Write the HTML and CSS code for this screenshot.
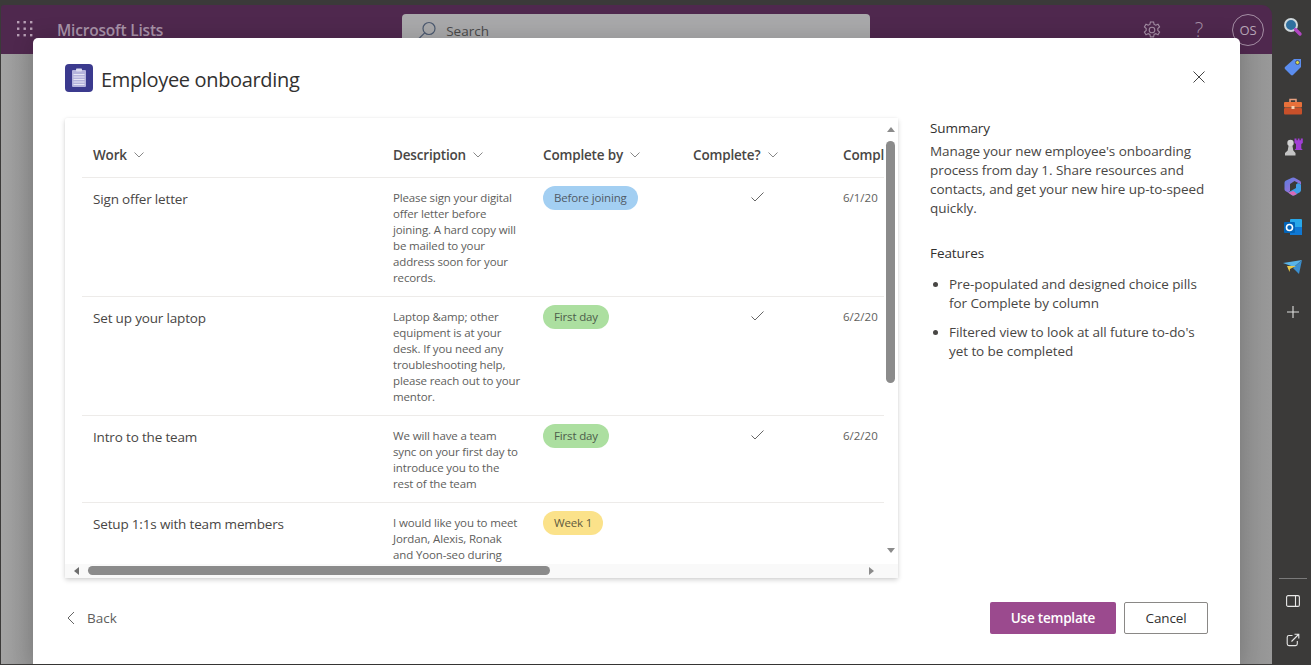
FILE: index.html
```html
<!DOCTYPE html>
<html lang="en">
<head>
<meta charset="utf-8">
<title>Employee onboarding</title>
<link rel="stylesheet" href="styles.css">
</head>
<body>
<div class="desktop">
  <div class="app">
    <header class="appbar">
      <svg class="waffle" width="16" height="16" viewBox="0 0 16 16"><g fill="#b79fb5"><rect x="0" y="0" width="2.4" height="2.4"/><rect x="6.5" y="0" width="2.4" height="2.4"/><rect x="13" y="0" width="2.4" height="2.4"/><rect x="0" y="6.5" width="2.4" height="2.4"/><rect x="6.5" y="6.5" width="2.4" height="2.4"/><rect x="13" y="6.5" width="2.4" height="2.4"/><rect x="0" y="13" width="2.4" height="2.4"/><rect x="6.5" y="13" width="2.4" height="2.4"/><rect x="13" y="13" width="2.4" height="2.4"/></g></svg>
      <span class="appname">Microsoft Lists</span>
      <div class="searchbox">
        <svg width="20" height="20" viewBox="0 0 20 20" fill="none" stroke="#4c5a70" stroke-width="1.2"><circle cx="12" cy="7.5" r="6"/><path d="M7.7 11.8 1.5 18"/></svg>
        <span>Search</span>
      </div>
      <div class="appbar-actions">
        <svg width="20" height="20" viewBox="0 0 20 20" fill="none" stroke="#a58fa5" stroke-width="1.1"><circle cx="10" cy="10" r="2.8"/><path d="M8.4 2h3.2l.5 2.4 1.7.8 2.2-1 1.6 2.7-1.8 1.6v1.9l1.8 1.6-1.6 2.7-2.2-1-1.7.8-.5 2.4H8.4l-.5-2.4-1.7-.8-2.2 1-1.6-2.7 1.8-1.6V8.5L2.4 6.9 4 4.2l2.2 1 1.7-.8z"/></svg>
        <span class="help">?</span>
        <span class="avatar">OS</span>
      </div>
    </header>
    <div class="backdrop"></div>
  </div>

  <aside class="rail">
    <div class="rail-top">
      <svg width="20" height="20" viewBox="0 0 20 20"><circle cx="8" cy="8" r="6" fill="#2f6f9f" stroke="#cfd8dc" stroke-width="2"/><path d="M12.5 12.5 17 17" stroke="#b146c2" stroke-width="3.4" stroke-linecap="round"/></svg>
      <svg width="20" height="20" viewBox="0 0 20 20"><path d="M11 2h7v8l-8 8a1.500 1.500 0 0 1-2 0L2 12a1.500 1.500 0 0 1 0-2z" fill="#5b8def"/><circle cx="14.500" cy="5.500" r="2" fill="#d8d84a" stroke="#46507a"/></svg>
      <svg width="20" height="20" viewBox="0 0 20 20"><path d="M7 5V2.500h6V5" fill="none" stroke="#e8a080" stroke-width="1.500"/><rect x="1" y="5" width="18" height="5.500" rx="1" fill="#e8703a"/><rect x="1" y="11" width="18" height="6.500" rx="1" fill="#c8502a"/><rect x="8.500" y="9" width="3" height="3" fill="#f6d0b0"/></svg>
      <svg width="20" height="20" viewBox="0 0 20 20"><circle cx="7.500" cy="6" r="3.200" fill="#d2d2d2"/><path d="M5.500 9h4l.8 4.500 2.200 2.500v2.500H2V16l2.700-2.500z" fill="#c4c4c4"/><path d="M11.500 1.500h2v1.700h1.300V1.500h1.700v1.700h1.300V1.500h2v4.500l-1.500 1v4.500l1.500 1.500h-8.300l1.500-1.500V7l-1.500-1z" fill="#a23fd6"/></svg>
      <svg width="20" height="20" viewBox="0 0 20 20"><defs><linearGradient id="hexa" x1="0" y1="0" x2="1" y2="1"><stop offset="0" stop-color="#5a7fe0"/><stop offset="1" stop-color="#b06ad8"/></linearGradient></defs><path d="M9 .800a3 3 0 0 1 2.500 0l5 2.700c1 .6 1.500 1.400 1.500 2.500v1.500L11.500 4 7 7v7l-2 1.500-2.200-1.300C1.800 13.600 1.500 12.800 1.500 12V6c0-1.100.5-1.900 1.500-2.500z" fill="url(#hexa)"/><path d="M18 7.500V13c0 1-.5 1.800-1.500 2.400L11.500 18.300a3 3 0 0 1-2.500 0L5 15.500 13 11V7.500L15 6z" fill="#3f9fe8"/><path d="M5 15.500l4 2.800a3 3 0 0 0 2.500 0L14 17l-3.500-3z" fill="#d86ab8"/></svg>
      <svg width="20" height="20" viewBox="0 0 20 20"><rect x="7" y="2" width="12" height="16" rx="1" fill="#28a8ea"/><rect x="7" y="10" width="12" height="8" fill="#0f78d4"/><rect x="1" y="5" width="11" height="11" rx="1" fill="#0364b8"/><circle cx="6.500" cy="10.500" r="3" fill="none" stroke="#fff" stroke-width="1.600"/></svg>
      <svg width="20" height="20" viewBox="0 0 20 20"><path d="M0 6 19 3 11 10z" fill="#58b4e8"/><path d="M19 3 16 17 10 11z" fill="#3a8fd0"/><path d="M4 9 13 9 7 12 6.500 15z" fill="#e8c84a"/></svg>
      <svg class="plus" width="14" height="14" viewBox="0 0 14 14"><path d="M7 1v12M1 7h12" stroke="#dedede" stroke-width="1.100"/></svg>
    </div>
    <div class="rail-bottom">
      <svg width="14" height="12" viewBox="0 0 14 12" fill="none" stroke="#e8e8e8" stroke-width="1.100"><rect x=".6" y=".6" width="12.800" height="10.800" rx="1.500"/><path d="M9.500 .6v10.800"/></svg>
      <svg width="14" height="14" viewBox="0 0 14 14" fill="none" stroke="#e8e8e8" stroke-width="1.100"><path d="M6.500 2.500H3A1.800 1.800 0 0 0 1.200 4.300v6.500A1.800 1.800 0 0 0 3 12.600h6.500a1.800 1.800 0 0 0 1.800-1.800V8"/><path d="M5.500 8.500 12.500 1.500M8.500 1.200h4.300v4.300"/></svg>
    </div>
  </aside>

  <section class="modal">
    <div class="modal-head">
      <svg class="listicon" width="28" height="28" viewBox="0 0 28 28"><rect width="28" height="28" rx="4" fill="#3b3a8e"/><rect x="7" y="6" width="14" height="17" rx="1" fill="#b4b3dc"/><rect x="11" y="4.500" width="6" height="3" rx=".8" fill="#dcdcf0"/><g fill="#e6e6f4"><rect x="8.500" y="10" width="11" height="1"/><rect x="8.500" y="12.500" width="11" height="1"/><rect x="8.500" y="15" width="11" height="1"/><rect x="8.500" y="17.500" width="11" height="1"/><rect x="8.500" y="20" width="11" height="1"/></g></svg>
      <h1>Employee onboarding</h1>
      <svg class="close" width="12" height="12" viewBox="0 0 12 12"><path d="M.5.500l11 11M11.500.500l-11 11" stroke="#444" stroke-width="1"/></svg>
    </div>

    <div class="modal-body">
      <div class="preview">
        <div class="table-clip">
          <table>
            <colgroup><col class="c-work"><col class="c-std"><col class="c-std"><col class="c-std"><col class="c-last"></colgroup>
            <thead>
              <tr>
                <th>Work <svg class="chev" width="10" height="6" viewBox="0 0 10 6"><path d="M.5.500 5 5 9.500.500" fill="none" stroke="#888"/></svg></th>
                <th>Description <svg class="chev" width="10" height="6" viewBox="0 0 10 6"><path d="M.5.500 5 5 9.500.500" fill="none" stroke="#888"/></svg></th>
                <th>Complete by <svg class="chev" width="10" height="6" viewBox="0 0 10 6"><path d="M.5.500 5 5 9.500.500" fill="none" stroke="#888"/></svg></th>
                <th>Complete? <svg class="chev" width="10" height="6" viewBox="0 0 10 6"><path d="M.5.500 5 5 9.500.500" fill="none" stroke="#888"/></svg></th>
                <th class="clipcell"><span>Compl</span></th>
              </tr>
            </thead>
            <tbody>
              <tr>
                <td class="work">Sign offer letter</td>
                <td class="desc">Please sign your digital offer letter before joining. A hard copy will be mailed to your address soon for your records.</td>
                <td class="pillcell"><span class="pill blue">Before joining</span></td>
                <td class="tick"><svg width="13" height="10" viewBox="0 0 13 10"><path d="M.5 5.500 4 9l8.500-8.500" fill="none" stroke="#666"/></svg></td>
                <td class="date">6/1/20</td>
              </tr>
              <tr>
                <td class="work">Set up your laptop</td>
                <td class="desc">Laptop &amp;amp; other equipment is at your desk. If you need any troubleshooting help, please reach out to your mentor.</td>
                <td class="pillcell"><span class="pill green">First day</span></td>
                <td class="tick"><svg width="13" height="10" viewBox="0 0 13 10"><path d="M.5 5.500 4 9l8.500-8.500" fill="none" stroke="#666"/></svg></td>
                <td class="date">6/2/20</td>
              </tr>
              <tr>
                <td class="work">Intro to the team</td>
                <td class="desc">We will have a team sync on your first day to introduce you to the rest of the team</td>
                <td class="pillcell"><span class="pill green">First day</span></td>
                <td class="tick"><svg width="13" height="10" viewBox="0 0 13 10"><path d="M.5 5.500 4 9l8.500-8.500" fill="none" stroke="#666"/></svg></td>
                <td class="date">6/2/20</td>
              </tr>
              <tr>
                <td class="work">Setup 1:1s with team members</td>
                <td class="desc">I would like you to meet Jordan, Alexis, Ronak and Yoon-seo during</td>
                <td class="pillcell"><span class="pill yellow">Week 1</span></td>
                <td></td>
                <td></td>
              </tr>
            </tbody>
          </table>
        </div>
        <div class="vbar">
          <span class="arrow up"></span>
          <span class="thumb-v"></span>
          <span class="arrow down"></span>
        </div>
        <div class="hbar">
          <span class="arrow left"></span>
          <span class="thumb-h"></span>
          <span class="arrow right"></span>
        </div>
      </div>

      <div class="info">
        <h2>Summary</h2>
        <p>Manage your new employee's onboarding process from day 1. Share resources and contacts, and get your new hire up-to-speed quickly.</p>
        <h2 class="features">Features</h2>
        <ul>
          <li>Pre-populated and designed choice pills for Complete by column</li>
          <li>Filtered view to look at all future to-do's yet to be completed</li>
        </ul>
      </div>
    </div>

    <div class="modal-foot">
      <div class="back">
        <svg width="9" height="14" viewBox="0 0 9 14"><path d="M8 1 2 7l6 6" fill="none" stroke="#666"/></svg>
        <span>Back</span>
      </div>
      <div class="actions">
        <button class="primary">Use template</button>
        <button class="secondary">Cancel</button>
      </div>
    </div>
  </section>
</div>
</body>
</html>
```
FILE: styles.css
```css
* { box-sizing: border-box; }
html, body { margin: 0; height: 100%; overflow: hidden; }
body { font-family: "Open Sans", "Noto Sans", "Liberation Sans", sans-serif; color: #323130; background: #3b3a39; }

.desktop { position: relative; display: flex; width: 1311px; height: 665px; padding-top: 5px; padding-bottom: 1px; padding-left: 1px; background: #3b3a39; }
.app { flex: 1; display: flex; flex-direction: column; min-width: 0; }

.appbar { height: 49px; display: flex; align-items: center; background: #4f284e; border-radius: 3px 10px 0 0; padding-left: 16px; }
.waffle { flex: none; margin-top: -2px; }
.appname { margin-left: 24px; font-size: 15.5px; font-weight: 600; color: #a893a8; letter-spacing: -.2px; white-space: nowrap; }
.searchbox { width: 468px; height: 40px; margin-left: 239px; margin-top: 8px; padding: 0 0 6px 15px; display: flex; align-items: center; gap: 9px; background: #a9a9ab; border-radius: 4px 4px 0 0; font-size: 13.5px; color: #4a4a4a; }
.appbar-actions { margin-left: auto; margin-right: 8px; display: flex; align-items: center; gap: 0; color: #a58fa5; }
.help { width: 20px; margin-left: 27px; text-align: center; font-size: 20px; font-weight: 300; line-height: 20px; }
.avatar { width: 32px; height: 32px; margin-left: 23px; border: 1px solid #a58fa5; border-radius: 50%; display: flex; align-items: center; justify-content: center; font-size: 13px; color: #b8a6b8; }
.backdrop { flex: 1; background: linear-gradient(90deg, #a3a3a3 0, #929292 32px, #8f8f8f 1238px, #999 1271px); }

.rail { width: 39px; flex: none; display: flex; flex-direction: column; justify-content: space-between; align-items: center; background: #3b3a39; }
.rail-top { display: flex; flex-direction: column; align-items: center; gap: 20px; padding-top: 12px; padding-left: 3px; }
.plus { margin-top: 8px; }
.rail-bottom { width: 28px; margin-left: 3px; display: flex; flex-direction: column; align-items: center; gap: 26px; padding: 16px 0 17px; border-top: 1px solid #7a7a7a; }

.modal { position: absolute; left: 33px; top: 38px; width: 1207px; height: 626px; display: flex; flex-direction: column; background: #fff; border-radius: 5px 5px 0 0; box-shadow: 0 0 22px rgba(0,0,0,.16); }
.modal-head { height: 80px; flex: none; display: flex; align-items: flex-start; padding: 26px 35px 0 32px; }
.listicon { flex: none; }
h1 { margin: 0 0 0 8px; font-size: 20px; line-height: 32px; font-weight: 500; letter-spacing: -.34px; color: #323130; white-space: nowrap; }
.close { margin-left: auto; margin-top: 7px; }

.modal-body { flex: 1; min-height: 0; display: flex; padding-left: 32px; }
.preview { position: relative; width: 833px; height: 460px; flex: none; border-radius: 2px; box-shadow: 0 2px 5px rgba(0,0,0,.18), 0 0 2px rgba(0,0,0,.05); padding: 15px 0 0 17px; }
.table-clip { width: 802px; height: 431px; overflow: hidden; }
table { border-collapse: collapse; table-layout: fixed; width: 911px; }
.c-work { width: 300px; }
.c-std { width: 150px; }
.c-last { width: 161px; }
th { height: 44px; padding: 0 0 0 11px; text-align: left; font-size: 13.5px; font-weight: 600; letter-spacing: -.17px; color: #484644; white-space: nowrap; border-bottom: 1px solid #edebe9; overflow: hidden; }
.chev { margin-left: 4px; vertical-align: 2px; }
.clipcell { overflow: hidden; }
td { padding: 8px 20px 7px 11px; vertical-align: top; border-bottom: 1px solid #edebe9; }
.work { padding-top: 12px; font-size: 13.5px; line-height: 19px; letter-spacing: -.17px; color: #484644; }
.desc { padding: 12px 10px 10px 11px; font-size: 11.500px; line-height: 16px; letter-spacing: -.14px; color: #605e5c; }
.pillcell { padding-top: 7px; }
.pill { display: inline-block; height: 24px; padding: 0 11px; border-radius: 12px; font-size: 11.500px; line-height: 24px; letter-spacing: -.15px; white-space: nowrap; color: #505a66; }
.blue { background: #a3cff2; }
.green { background: #acdfa0; color: #4d5d4b; }
.yellow { background: #fbe28a; color: #5f5a3e; }
.tick { padding-top: 13px; padding-left: 69px; line-height: 10px; }
.date { padding-top: 12px; font-size: 11.500px; line-height: 16px; color: #605e5c; white-space: nowrap; }

.vbar { position: absolute; right: 0; top: 0; width: 14px; height: 446px; background: #fff; }
.thumb-v { position: absolute; left: 2px; top: 23px; width: 9px; height: 242px; border-radius: 5px; background: #8b8b8b; }
.hbar { position: absolute; left: 0; bottom: 0; width: 100%; height: 14px; background: #f9f9f9; }
.thumb-h { position: absolute; left: 23px; top: 2px; width: 462px; height: 9px; border-radius: 5px; background: #8b8b8b; }
.arrow { position: absolute; width: 0; height: 0; border: 4px solid transparent; }
.up { left: 3px; top: 9px; border-top: 0; border-bottom: 5px solid #8b8b8b; }
.down { left: 3px; top: 430px; border-bottom: 0; border-top: 5px solid #8b8b8b; }
.left { left: 9px; top: 3px; border-left: 0; border-right: 5px solid #6e6e6e; }
.right { left: 804px; top: 3px; border-right: 0; border-left: 5px solid #8b8b8b; }

.info { width: 280px; margin-left: 32px; padding-top: 1px; font-size: 13.5px; line-height: 19px; letter-spacing: -.07px; color: #484644; }
h2 { margin: 0; font-size: 13.5px; line-height: 19px; font-weight: 500; color: #323130; }
.info p { margin: 4px 0 0; }
.info h2.features { margin-top: 26px; }
ul { margin: 12px 0 0; padding: 0 0 0 19px; }
li { margin-bottom: 10px; }

.modal-foot { height: 88px; flex: none; display: flex; align-items: flex-start; justify-content: space-between; padding: 26px 32px 0 33px; }
.back { display: flex; align-items: center; height: 32px; font-size: 13.5px; color: #605e5c; }
.back span { margin-left: 12px; }
.actions { display: flex; gap: 8px; }
button { height: 32px; padding: 0; border-radius: 2px; font-family: inherit; font-size: 13.500px; letter-spacing: -.13px; cursor: pointer; }
.primary { width: 126px; font-weight: 600; letter-spacing: -.22px; color: #fff; background: #9b4a8e; border: 0; }
.secondary { width: 84px; font-weight: 500; color: #323130; background: #fff; border: 1px solid #8a8886; }
```
